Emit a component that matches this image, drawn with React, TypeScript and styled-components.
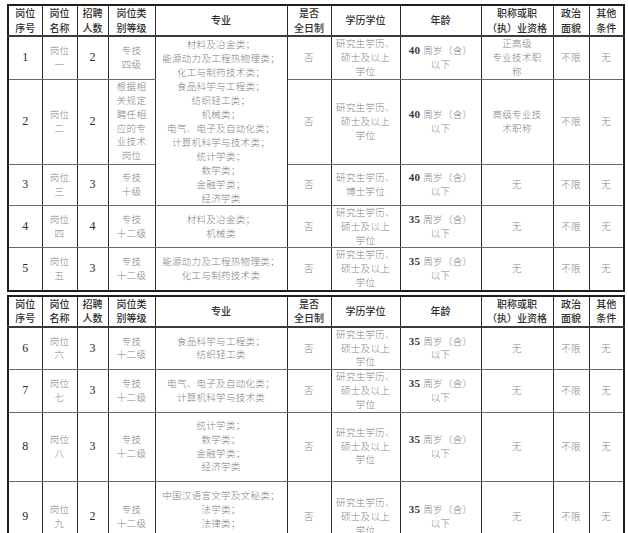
import React from 'react';
import styled, { createGlobalStyle } from 'styled-components';

const GlobalStyle = createGlobalStyle`
  body {
    margin: 0;
    background: #ffffff;
  }
`;

const Page = styled.div`
  padding: 4px 0 0 7px;
  display: flex;
  flex-direction: column;
  gap: 3px;
`;

const Table = styled.table`
  border-collapse: collapse;
  table-layout: fixed;
  width: 616px;
  border: 2px solid #1e1e1e;
`;

const Row = styled.tr<{ $h: number }>`
  height: ${(p) => p.$h}px;
`;

const HeadCell = styled.th`
  border: 1px solid #2a2a2a;
  border-bottom: 2px solid #3a3a3a;
  padding: 0;
  font-family: 'Noto Sans CJK SC', sans-serif;
  font-weight: 500;
  font-size: 10px;
  line-height: 14.5px;
  color: #2e2e2e;
  text-align: center;
  vertical-align: middle;
  white-space: nowrap;
`;

const Cell = styled.td<{ $tone?: 'num' | 'text'; $loose?: boolean }>`
  border-left: 1px solid #2a2a2a;
  border-right: 1px solid #2a2a2a;
  border-top: 1px solid #6a6a6a;
  border-bottom: 1px solid #6a6a6a;
  padding: 0;
  text-align: center;
  vertical-align: middle;
  white-space: nowrap;
  font-family: ${(p) =>
    p.$tone === 'num'
      ? "'Liberation Serif', serif"
      : "'Noto Sans CJK SC', sans-serif"};
  font-weight: ${(p) => (p.$tone === 'num' ? 400 : 300)};
  font-size: ${(p) => (p.$tone === 'num' ? '12px' : '9.5px')};
  line-height: ${(p) => (p.$loose ? '14px' : '13.8px')};
  letter-spacing: ${(p) => (p.$tone === 'num' ? '0' : '0.3px')};
  color: ${(p) => (p.$tone === 'num' ? '#2a2a2a' : '#828282')};
`;

const AgeNum = styled.span`
  font-family: 'Liberation Serif', serif;
  font-weight: 700;
  font-size: 11px;
  color: #3a3a3a;
  margin-right: 3px;
`;

const widths = [34, 35, 31, 47, 132, 44, 69, 81, 72, 36, 35];

const headers: string[][] = [
  ['岗位', '序号'],
  ['岗位', '名称'],
  ['招聘', '人数'],
  ['岗位类', '别等级'],
  ['专业'],
  ['是否', '全日制'],
  ['学历学位'],
  ['年龄'],
  ['职称或职', '（执）业资格'],
  ['政治', '面貌'],
  ['其他', '条件'],
];

interface PostRow {
  no: string;
  name: string[];
  count: string;
  level: string[];
  major?: string[];
  majorSpan?: number;
  degree: string[];
  age: string;
  title: string[];
  h: number;
}

const master = ['研究生学历、', '硕士及以上', '学位'];
const tech12 = ['专技', '十二级'];

const firstRows: PostRow[] = [
  {
    no: '1',
    name: ['岗位', '一'],
    count: '2',
    level: ['专技', '四级'],
    major: [
      '材料及冶金类；',
      '能源动力及工程热物理类；',
      '化工与制药技术类；',
      '食品科学与工程类；',
      '纺织轻工类；',
      '机械类；',
      '电气、电子及自动化类；',
      '计算机科学与技术类；',
      '统计学类；',
      '数学类；',
      '金融学类；',
      '经济学类',
    ],
    majorSpan: 3,
    degree: master,
    age: '40',
    title: ['正高级', '专业技术职', '称'],
    h: 42,
  },
  {
    no: '2',
    name: ['岗位', '二'],
    count: '2',
    level: ['根据相', '关规定', '聘任相', '应的专', '业技术', '岗位'],
    degree: master,
    age: '40',
    title: ['高级专业技', '术职称'],
    h: 85,
  },
  {
    no: '3',
    name: ['岗位', '三'],
    count: '3',
    level: ['专技', '十级'],
    degree: ['研究生学历、', '博士学位'],
    age: '40',
    title: ['无'],
    h: 41,
  },
  {
    no: '4',
    name: ['岗位', '四'],
    count: '4',
    level: tech12,
    major: ['材料及冶金类；', '机械类'],
    degree: master,
    age: '35',
    title: ['无'],
    h: 41,
  },
  {
    no: '5',
    name: ['岗位', '五'],
    count: '3',
    level: tech12,
    major: ['能源动力及工程热物理类；', '化工与制药技术类'],
    degree: master,
    age: '35',
    title: ['无'],
    h: 41,
  },
];

const secondRows: PostRow[] = [
  {
    no: '6',
    name: ['岗位', '六'],
    count: '3',
    level: tech12,
    major: ['食品科学与工程类；', '纺织轻工类'],
    degree: master,
    age: '35',
    title: ['无'],
    h: 42,
  },
  {
    no: '7',
    name: ['岗位', '七'],
    count: '3',
    level: tech12,
    major: ['电气、电子及自动化类；', '计算机科学与技术类'],
    degree: master,
    age: '35',
    title: ['无'],
    h: 41,
  },
  {
    no: '8',
    name: ['岗位', '八'],
    count: '3',
    level: tech12,
    major: ['统计学类；', '数学类；', '金融学类；', '经济学类'],
    degree: master,
    age: '35',
    title: ['无'],
    h: 69,
  },
  {
    no: '9',
    name: ['岗位', '九'],
    count: '2',
    level: tech12,
    major: ['中国汉语言文学及文秘类；', '法学类；', '法律类；', '公共管理类'],
    degree: master,
    age: '35',
    title: ['无'],
    h: 72,
  },
];

const Lines = ({ lines }: { lines: string[] }) => (
  <>
    {lines.map((line, i) => (
      <React.Fragment key={i}>
        {i > 0 && <br />}
        {line}
      </React.Fragment>
    ))}
  </>
);

const PostTable = ({ rows }: { rows: PostRow[] }) => (
  <Table>
    <colgroup>
      {widths.map((w, i) => (
        <col key={i} style={{ width: w }} />
      ))}
    </colgroup>
    <thead>
      <Row $h={27}>
        {headers.map((h, i) => (
          <HeadCell key={i}>
            <Lines lines={h} />
          </HeadCell>
        ))}
      </Row>
    </thead>
    <tbody>
      {rows.map((row) => (
        <Row $h={row.h} key={row.no}>
          <Cell $tone="num">{row.no}</Cell>
          <Cell>
            <Lines lines={row.name} />
          </Cell>
          <Cell $tone="num">{row.count}</Cell>
          <Cell>
            <Lines lines={row.level} />
          </Cell>
          {row.major && (
            <Cell rowSpan={row.majorSpan ?? 1} $loose={(row.majorSpan ?? 1) > 1}>
              <Lines lines={row.major} />
            </Cell>
          )}
          <Cell>否</Cell>
          <Cell>
            <Lines lines={row.degree} />
          </Cell>
          <Cell>
            <AgeNum>{row.age}</AgeNum>周岁（含）
            <br />
            以下
          </Cell>
          <Cell>
            <Lines lines={row.title} />
          </Cell>
          <Cell>不限</Cell>
          <Cell>无</Cell>
        </Row>
      ))}
    </tbody>
  </Table>
);

export default function App() {
  return (
    <>
      <GlobalStyle />
      <Page>
        <PostTable rows={firstRows} />
        <PostTable rows={secondRows} />
      </Page>
    </>
  );
}
